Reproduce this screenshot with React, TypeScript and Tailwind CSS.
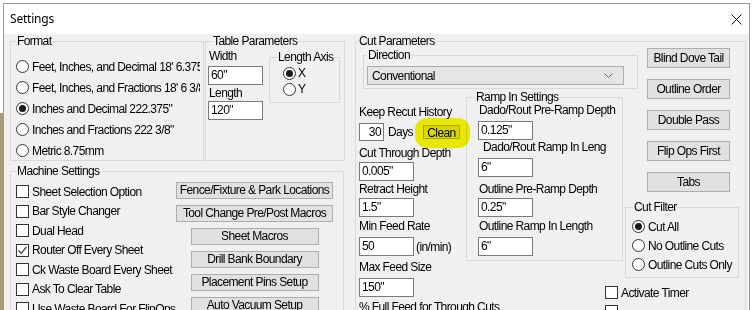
import type { ReactNode } from 'react';

const font = "font-['Liberation_Sans',Arial,sans-serif]";

function Group({
  label,
  className,
  legendClass,
  children,
}: {
  label: string;
  className: string;
  legendClass: string;
  children?: ReactNode;
}) {
  return (
    <fieldset className={`border border-[#d9d9d9] shrink-0 min-w-0 ${className}`}>
      <legend className={`px-[1px] whitespace-nowrap ${legendClass}`}>{label}</legend>
      {children}
    </fieldset>
  );
}

function Radio({ checked = false }: { checked?: boolean }) {
  return (
    <span className="w-[13px] h-[13px] rounded-full border border-[#333] bg-white flex items-center justify-center shrink-0">
      {checked && <span className="w-[7px] h-[7px] rounded-full bg-[#1b1b1b]" />}
    </span>
  );
}

function Check({ checked = false }: { checked?: boolean }) {
  return (
    <span className="w-[13px] h-[13px] border border-[#333] bg-white shrink-0 flex items-center justify-center">
      {checked && (
        <svg width="11" height="11" viewBox="0 0 11 11">
          <polyline points="1.5,5.5 4.2,8.3 9.5,2" fill="none" stroke="#444" strokeWidth="1.3" />
        </svg>
      )}
    </span>
  );
}

function Field({ value, className = '' }: { value: string; className?: string }) {
  return (
    <div className={`h-[19px] w-[55px] border border-[#7a7a7a] bg-white px-[2px] leading-[17px] shrink-0 ${className}`}>
      {value}
    </div>
  );
}

function Btn({ children, className = '' }: { children: ReactNode; className?: string }) {
  return (
    <button className={`bg-[#e1e1e1] border border-[#adadad] text-black text-center leading-[15px] whitespace-nowrap shrink-0 ${className}`}>
      {children}
    </button>
  );
}

const formats = [
  { text: 'Feet, Inches, and Decimal 18\' 6.375"', checked: false },
  { text: 'Feet, Inches, and Fractions 18\' 6 3/8"', checked: false },
  { text: 'Inches and Decimal 222.375"', checked: true },
  { text: 'Inches and Fractions 222 3/8"', checked: false },
  { text: 'Metric 8.75mm', checked: false },
];

const machine = [
  { text: 'Sheet Selection Option', checked: false },
  { text: 'Bar Style Changer', checked: false },
  { text: 'Dual Head', checked: false },
  { text: 'Router Off Every Sheet', checked: true },
  { text: 'Ck Waste Board Every Sheet', checked: false },
  { text: 'Ask To Clear Table', checked: false },
  { text: 'Use Waste Board For FlipOps', checked: false },
];

export default function App() {
  return (
    <div className={`w-[753px] h-[310px] overflow-hidden flex bg-white text-[12px] tracking-[-0.6px] text-black ${font}`}>
      <div className="w-[3px] flex flex-col shrink-0">
        <div className="h-[113px] bg-white" />
        <div className="flex-1 bg-[#a99c74]" />
      </div>

      <div className="w-[747px] mt-[3px] border-l border-t border-r border-[#9a9a9a] flex flex-col shrink-0">
        <div className="h-[30px] bg-white flex items-center justify-between pl-[6px] pr-[7px] shrink-0">
          <span className="font-['Noto_Sans',sans-serif] text-[12px] tracking-[-0.2px]">Settings</span>
          <svg width="11" height="11" viewBox="0 0 11 11">
            <path d="M0.5 0.5 L10.5 10.5 M10.5 0.5 L0.5 10.5" stroke="#111" strokeWidth="1" />
          </svg>
        </div>

        <div className="flex-1 bg-[#f0f0f0] flex pl-[6px]">
          {/* left column */}
          <div className="w-[334px] flex flex-col shrink-0">
            <div className="flex gap-[1px]">
              <Group label="Format" className="w-[194px] h-[127px]" legendClass="leading-[14px] ml-[5px]">
                <div className="pl-[5px] pt-[8px]">
                  {formats.map((f) => (
                    <div key={f.text} className="h-[21px] w-[184px] flex items-center gap-[3px] overflow-hidden whitespace-nowrap">
                      <Radio checked={f.checked} />
                      <span>{f.text}</span>
                    </div>
                  ))}
                </div>
              </Group>

              <Group label="Table Parameters" className="w-[140px] h-[127px]" legendClass="leading-[14px] ml-[6px]">
                <div className="flex pl-[2px]">
                  <div className="flex flex-col">
                    <div className="leading-[16px] h-[16px] ml-[1px]">Width</div>
                    <Field value={'60"'} className="mt-[2px]" />
                    <div className="leading-[16px] h-[16px] ml-[1px]">Length</div>
                    <Field value={'120"'} />
                  </div>
                  <Group label="Length Axis" className="ml-[6px] mt-[2px] w-[71px] h-[53px]" legendClass="leading-[14px] ml-[7px]">
                    <div className="pl-[13px] mt-[1px]">
                      <div className="h-[16px] flex items-center gap-[2px]">
                        <Radio checked />
                        <span>X</span>
                      </div>
                      <div className="h-[16px] flex items-center gap-[2px]">
                        <Radio />
                        <span>Y</span>
                      </div>
                    </div>
                  </Group>
                </div>
              </Group>
            </div>

            <Group label="Machine Settings" className="mt-[3px] w-[334px] h-[160px]" legendClass="leading-[14px] ml-[5px]">
              <div className="flex">
                <div className="w-[165px] pl-[5px] pt-[4px] shrink-0">
                  {machine.map((m) => (
                    <div key={m.text} className="h-[19.5px] flex items-center gap-[3px] whitespace-nowrap">
                      <Check checked={m.checked} />
                      <span>{m.text}</span>
                    </div>
                  ))}
                </div>
                <div className="w-[157px] mt-[4px] flex flex-col items-center gap-[6px]">
                  <Btn className="w-[157px] h-[17px]">Fence/Fixture &amp; Park Locations</Btn>
                  <Btn className="w-[157px] h-[17px]">Tool Change Pre/Post Macros</Btn>
                  <Btn className="w-[128px] h-[17px]">Sheet Macros</Btn>
                  <Btn className="w-[128px] h-[17px]">Drill Bank Boundary</Btn>
                  <Btn className="w-[128px] h-[17px]">Placement Pins Setup</Btn>
                  <Btn className="w-[128px] h-[17px]">Auto Vacuum Setup</Btn>
                </div>
              </div>
            </Group>
          </div>

          {/* cut parameters */}
          <Group label="Cut Parameters" className="ml-[11px] w-[391px] h-[300px]" legendClass="leading-[14px] ml-[2px]">
            <div className="flex">
              <div className="w-[282px] shrink-0">
                <Group label="Direction" className="ml-[7px] w-[275px] h-[41px]" legendClass="leading-[14px] ml-[3px]">
                  <div className="ml-[3px] mt-[4px] w-[257px] h-[19px] bg-[#e5e5e5] border border-[#acacac] flex items-center justify-between pl-[4px] pr-[10px]">
                    <span>Conventional</span>
                    <svg width="9" height="6" viewBox="0 0 9 6">
                      <polyline points="0.5,0.5 4.5,4.5 8.5,0.5" fill="none" stroke="#606060" strokeWidth="1" />
                    </svg>
                  </div>
                </Group>

                <div className="flex">
                  <div className="w-[110px] pl-[3px] flex flex-col shrink-0">
                    <div className="mt-[15px] leading-[16px] whitespace-nowrap">Keep Recut History</div>
                    <div className="mt-[3px] h-[18px] flex items-center">
                      <div className="h-[18px] w-[25px] border border-[#7a7a7a] bg-white text-right pr-[2px] leading-[16px]">30</div>
                      <span className="ml-[4px]">Days</span>
                      <span className="relative ml-[10px] flex">
                        <Btn className="w-[37px] h-[14px] leading-[12px]">Clean</Btn>
                        <span className="absolute left-[-8px] top-[-7px] w-[55px] h-[30px] rounded-[12px] bg-[#f6f600] mix-blend-multiply" />
                      </span>
                    </div>
                    <div className="mt-[4px] leading-[16px] whitespace-nowrap">Cut Through Depth</div>
                    <Field value={'0.005"'} className="mt-[1px]" />
                    <div className="leading-[16px] whitespace-nowrap">Retract Height</div>
                    <Field value={'1.5"'} className="mt-[1px]" />
                    <div className="mt-[1px] leading-[16px] whitespace-nowrap">Min Feed Rate</div>
                    <div className="mt-[3px] flex items-center">
                      <Field value="50" />
                      <span className="ml-[2px]">(in/min)</span>
                    </div>
                    <div className="mt-[3px] leading-[16px] whitespace-nowrap">Max Feed Size</div>
                    <Field value={'150"'} className="mt-[3px]" />
                    <div className="mt-[2px] leading-[16px] whitespace-nowrap">% Full Feed for Through Cuts</div>
                  </div>

                  <Group label="Ramp In Settings" className="mt-[2px] w-[157px] h-[170px]" legendClass="leading-[12px] ml-[8px]">
                    <div className="flex flex-col">
                      <div className="ml-[12px] mt-[1px] leading-[12px] whitespace-nowrap">Dado/Rout Pre-Ramp Depth</div>
                      <Field value={'0.125"'} className="ml-[11px] mt-[5px]" />
                      <div className="ml-[16px] leading-[14px] whitespace-nowrap">Dado/Rout Ramp In Leng</div>
                      <Field value={'6"'} className="ml-[11px] mt-[4px]" />
                      <div className="ml-[12px] mt-[5px] leading-[14px] whitespace-nowrap">Outline Pre-Ramp Depth</div>
                      <Field value={'0.25"'} className="ml-[11px] mt-[2px]" />
                      <div className="ml-[12px] mt-[2px] leading-[14px] whitespace-nowrap">Outline Ramp In Length</div>
                      <Field value={'6"'} className="ml-[11px] mt-[4px]" />
                    </div>
                  </Group>
                </div>
              </div>

              <div className="w-[107px] flex flex-col shrink-0">
                <div className="ml-[9px] flex flex-col gap-[11px]">
                  <Btn className="w-[83px] h-[20px]">Blind Dove Tail</Btn>
                  <Btn className="w-[83px] h-[20px]">Outline Order</Btn>
                  <Btn className="w-[83px] h-[20px]">Double Pass</Btn>
                  <Btn className="w-[83px] h-[20px]">Flip Ops First</Btn>
                  <Btn className="w-[83px] h-[20px]">Tabs</Btn>
                </div>
                <Group label="Cut Filter" className="mt-[8px] ml-[-13px] w-[114px] h-[78px]" legendClass="leading-[14px] ml-[7px]">
                  <div className="pl-[6px] pt-[3px]">
                    {[
                      { t: 'Cut All', c: true },
                      { t: 'No Outline Cuts', c: false },
                      { t: 'Outline Cuts Only', c: false },
                    ].map((r) => (
                      <div key={r.t} className="h-[19px] flex items-center gap-[3px] whitespace-nowrap">
                        <Radio checked={r.c} />
                        <span>{r.t}</span>
                      </div>
                    ))}
                  </div>
                </Group>
                <div className="ml-[-33px] mt-[5px] h-[19px] flex items-center gap-[3px] whitespace-nowrap">
                  <Check />
                  <span>Activate Timer</span>
                </div>
                <div className="ml-[-33px] h-[19px] flex items-center">
                  <Check />
                </div>
              </div>
            </div>
          </Group>
        </div>
      </div>
    </div>
  );
}
